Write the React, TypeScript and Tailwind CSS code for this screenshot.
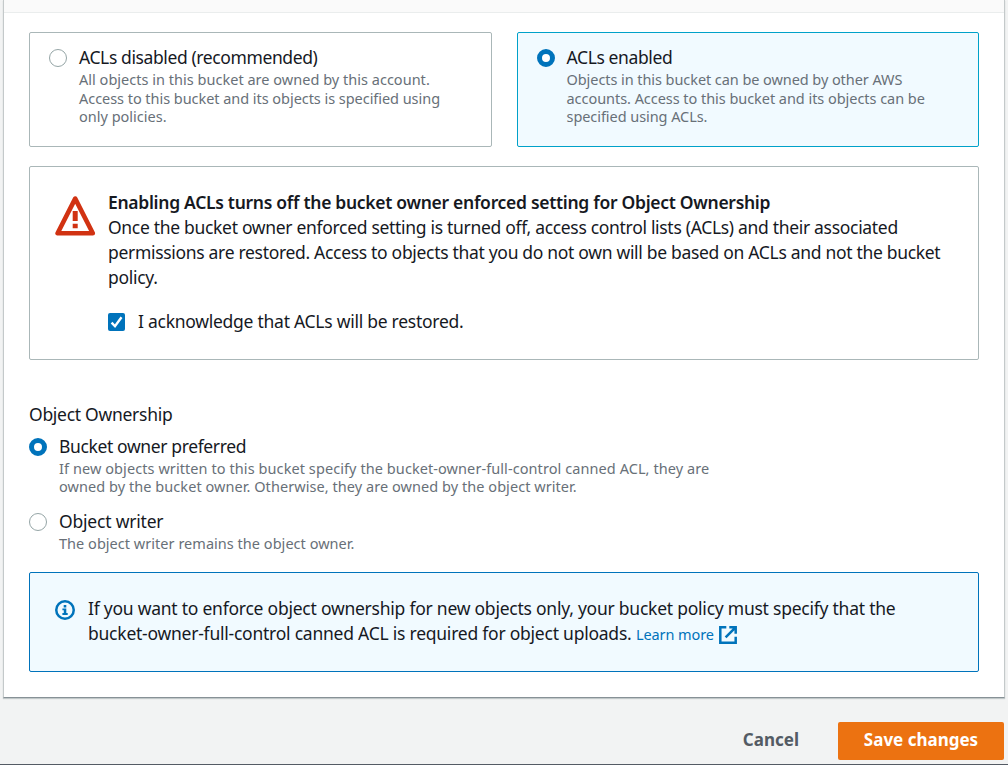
import React from "react";

function Radio({ checked }: { checked?: boolean }) {
  return checked ? (
    <span className="block h-[18px] w-[18px] shrink-0 rounded-full border-[5.5px] border-[#0073bb] bg-white" />
  ) : (
    <span className="block h-[18px] w-[18px] shrink-0 rounded-full border border-[#95a5a6] bg-white" />
  );
}

type Line = [text: string, tracking: string];

function Lines({ lines, className }: { lines: Line[]; className: string }) {
  return (
    <div className={className}>
      {lines.map(([text, tracking]) => (
        <div key={text} className={`whitespace-nowrap ${tracking}`}>
          {text}
        </div>
      ))}
    </div>
  );
}

interface ChoiceProps {
  title: string;
  titleTracking: string;
  lines: Line[];
  leading: string;
  checked?: boolean;
}

function Choice({ title, titleTracking, lines, leading, checked }: ChoiceProps) {
  return (
    <label className="flex gap-3">
      <span className="pt-[4px]">
        <Radio checked={checked} />
      </span>
      <div>
        <div className={`h-[25px] leading-[25px] whitespace-nowrap ${titleTracking}`}>{title}</div>
        <Lines lines={lines} className={`text-[14.5px] text-[#687078] ${leading}`} />
      </div>
    </label>
  );
}

export default function App() {
  return (
    <div className="flex h-[765px] w-[1008px] flex-col overflow-hidden border-b border-[#545b64] bg-[#f2f3f3] font-['Noto_Sans',sans-serif] text-[17.5px] text-[#16191f]">
      <main className="mr-[3px] ml-[3px] flex h-[698px] shrink-0 flex-col border-x border-b border-x-[#c4c9ca] border-b-[#879196] bg-white shadow-[0_1px_1px_rgba(0,28,36,0.2)]">
        <div className="h-[13px] shrink-0 border-b border-[#eaeded] bg-[#fafafa]" />
        <div className="px-[25px] pt-[19px]">
          <div className="grid grid-cols-[463px_462px] gap-[25px]">
            <div className="h-[115px] rounded-[2px] border border-[#aab7b8] px-[19px] pt-[12px]">
              <Choice
                title="ACLs disabled (recommended)"
                titleTracking="tracking-[-0.39px]"
                leading="leading-[18.5px]"
                lines={[
                  ["All objects in this bucket are owned by this account.", "tracking-[0.02px]"],
                  ["Access to this bucket and its objects is specified using", "tracking-[-0.045px]"],
                  ["only policies.", "tracking-[0px]"],
                ]}
              />
            </div>
            <div className="h-[115px] rounded-[2px] border border-[#00a1c9] bg-[#f1faff] pr-[19px] pl-[18.5px] pt-[12px]">
              <Choice
                checked
                title="ACLs enabled"
                titleTracking="tracking-[-0.38px]"
                leading="leading-[18.5px]"
                lines={[
                  ["Objects in this bucket can be owned by other AWS", "tracking-[-0.07px]"],
                  ["accounts. Access to this bucket and its objects can be", "tracking-[-0.045px]"],
                  ["specified using ACLs.", "tracking-[-0.06px]"],
                ]}
              />
            </div>
          </div>

          <section className="mt-[19px] flex h-[194px] gap-[12px] rounded-[2px] border border-[#aab7b8] px-[25px] pt-[23px]">
            <svg viewBox="0 0 41 41" className="mt-[5px] h-[41px] w-[41px] shrink-0" fill="none">
              <path d="M20.2 3.6 2.6 38.2h35.2z" stroke="#d13212" strokeWidth="4.6" strokeLinejoin="round" />
              <path d="M20.2 16v10M20.2 28.8v4.5" stroke="#d13212" strokeWidth="5" />
            </svg>
            <div>
              <div className="leading-[25px] font-semibold whitespace-nowrap tracking-[-0.295px]">
                Enabling ACLs turns off the bucket owner enforced setting for Object Ownership
              </div>
              <Lines
                className="leading-[25px]"
                lines={[
                  ["Once the bucket owner enforced setting is turned off, access control lists (ACLs) and their associated", "tracking-[-0.312px]"],
                  ["permissions are restored. Access to objects that you do not own will be based on ACLs and not the bucket", "tracking-[-0.313px]"],
                  ["policy.", "tracking-[-0.3px]"],
                ]}
              />
              <label className="mt-[19px] flex items-center gap-3 leading-[25px]">
                <svg viewBox="0 0 18 18" className="h-[18px] w-[18px]" fill="none">
                  <rect width="17" height="18" rx="2" fill="#0073bb" />
                  <path d="m3.6 9.6 3.4 3.6 6.5-9" stroke="#fff" strokeWidth="2.4" />
                </svg>
                <span className="whitespace-nowrap tracking-[-0.263px]">I acknowledge that ACLs will be restored.</span>
              </label>
            </div>
          </section>

          <div className="mt-[42px] leading-[25px] tracking-[-0.28px]">Object Ownership</div>
          <div className="mt-[7px] h-[75px]">
            <Choice
              checked
              title="Bucket owner preferred"
              titleTracking="tracking-[-0.37px]"
              leading="leading-[18px]"
              lines={[
                ["If new objects written to this bucket specify the bucket-owner-full-control canned ACL, they are", "tracking-[0.078px]"],
                ["owned by the bucket owner. Otherwise, they are owned by the object writer.", "tracking-[0.055px]"],
              ]}
            />
          </div>
          <div className="h-[63px]">
            <Choice
              title="Object writer"
              titleTracking="tracking-[-0.2px]"
              leading="leading-[18px]"
              lines={[["The object writer remains the object owner.", "tracking-[0.03px]"]]}
            />
          </div>

          <section className="flex h-[100px] gap-[13px] rounded-[2px] border border-[#0073bb] bg-[#f1faff] px-[25px] pt-[23px]">
            <svg viewBox="0 0 20 20" className="mt-[4px] h-[20px] w-[20px] shrink-0" fill="none">
              <circle cx="10" cy="10" r="8.75" stroke="#0073bb" strokeWidth="2.5" />
              <path d="M8.7 5h2.6v2.4H8.7zM7.4 8.4h3.9v4.7h1.4V15H7.4v-1.9h1.4v-2.8H7.4z" fill="#0073bb" />
            </svg>
            <div className="leading-[25px]">
              <div className="whitespace-nowrap tracking-[-0.24px]">
                If you want to enforce object ownership for new objects only, your bucket policy must specify that the
              </div>
              <div className="flex whitespace-nowrap">
                <span className="tracking-[-0.236px]">bucket-owner-full-control canned ACL is required for object uploads.</span>
                <a className="ml-[4.5px] flex pt-px text-[14.5px] tracking-[-0.1px] text-[#0073bb]">
                  <span>Learn more</span>
                  <svg viewBox="0 0 18 18" className="mt-[4px] ml-[5.5px] h-[18px] w-[18px]" fill="none" stroke="#0073bb" strokeWidth="2.5">
                    <path d="M7.3 1.3H1.3v15.4h15.4v-6M10.3 1.3h6.4v6.4M16.3 1.7l-9.7 9.7" />
                  </svg>
                </a>
              </div>
            </div>
          </section>
        </div>
      </main>

      <footer className="mt-[24px] mr-[4px] flex items-center justify-end">
        <button className="mr-[39px] pb-[4px] text-[17px] leading-[25px] font-bold whitespace-nowrap text-[#545b64]">Cancel</button>
        <button className="h-[38px] w-[166px] rounded-[2px] bg-[#ec7211] pb-[2px] text-[17px] font-bold whitespace-nowrap text-white">Save changes</button>
      </footer>
    </div>
  );
}
